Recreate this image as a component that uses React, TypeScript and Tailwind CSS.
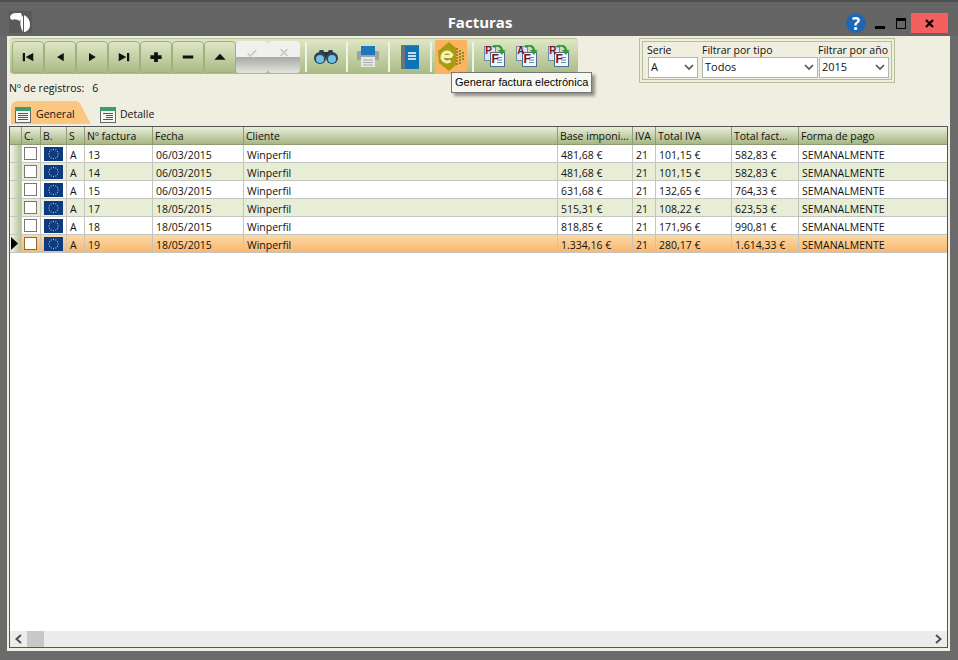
import React from "react";

const font = "[font-family:Open_Sans,Liberation_Sans,sans-serif]";

type Invoice = {
  num: string;
  date: string;
  base: string;
  totalIva: string;
  total: string;
};

const invoices: Invoice[] = [
  { num: "13", date: "06/03/2015", base: "481,68 €", totalIva: "101,15 €", total: "582,83 €" },
  { num: "14", date: "06/03/2015", base: "481,68 €", totalIva: "101,15 €", total: "582,83 €" },
  { num: "15", date: "06/03/2015", base: "631,68 €", totalIva: "132,65 €", total: "764,33 €" },
  { num: "17", date: "18/05/2015", base: "515,31 €", totalIva: "108,22 €", total: "623,53 €" },
  { num: "18", date: "18/05/2015", base: "818,85 €", totalIva: "171,96 €", total: "990,81 €" },
  { num: "19", date: "18/05/2015", base: "1.334,16 €", totalIva: "280,17 €", total: "1.614,33 €" },
];

const cols = [
  { label: "C.", w: "w-[19px]" },
  { label: "B.", w: "w-[26px]" },
  { label: "S", w: "w-[18px]" },
  { label: "Nº factura", w: "w-[68px]" },
  { label: "Fecha", w: "w-[91px]" },
  { label: "Cliente", w: "w-[314px]" },
  { label: "Base imponi...", w: "w-[75px]" },
  { label: "IVA", w: "w-[23px]" },
  { label: "Total IVA", w: "w-[76px]" },
  { label: "Total fact...", w: "w-[67px]" },
  { label: "Forma de pago", w: "flex-1" },
];

function NavButton({ children }: { children: React.ReactNode }) {
  return (
    <div className="flex h-[32px] w-[32px] items-center justify-center rounded-[4px] border border-[#9fb07c] bg-gradient-to-b from-[#dfe6c6] to-[#aabb86]">
      <svg width="12" height="10" viewBox="0 0 16 13" fill="#111">
        {children}
      </svg>
    </div>
  );
}

function GhostButton({ mark }: { mark: string }) {
  return (
    <div className="flex h-[32px] w-[32px] flex-col overflow-hidden rounded-[4px]">
      <div className="flex h-[16px] items-end justify-center bg-[#f0f0ee]">
        <svg width="12" height="8" viewBox="0 0 14 9" fill="none" stroke="#c9c9c7" strokeWidth="2">
          <path d={mark} />
        </svg>
      </div>
      <div className="flex-1 bg-gradient-to-b from-[#a9a9a5] to-[#e6e6e0]" />
    </div>
  );
}

function Sep() {
  return <div className="mx-[4px] h-[30px] w-[2px] bg-[#f1f3e6]" />;
}

function Binoculars() {
  return (
    <svg width="24" height="14" viewBox="0 0 24 14">
      <rect x="5" y="0" width="5" height="5" rx="1.5" fill="#2b3f4f" />
      <rect x="14" y="0" width="5" height="5" rx="1.5" fill="#2b3f4f" />
      <rect x="9" y="2" width="6" height="5" fill="#24323e" />
      <circle cx="6" cy="8" r="6" fill="#2f4354" />
      <circle cx="18" cy="8" r="6" fill="#2f4354" />
      <circle cx="6" cy="9" r="4" fill="#6fc3e8" />
      <circle cx="18" cy="9" r="4" fill="#6fc3e8" />
    </svg>
  );
}

function Printer() {
  return (
    <svg width="22" height="21" viewBox="0 0 22 21">
      <rect x="4" y="0" width="14" height="7" fill="#1c78b8" />
      <rect x="0" y="5" width="22" height="9" rx="1" fill="#9aa4a8" />
      <rect x="4" y="5" width="14" height="4" fill="#1c78b8" />
      <rect x="4" y="11" width="14" height="10" fill="#e8e8e4" />
      <path d="M6 14h10M6 16.5h10M6 19h10" stroke="#a9a9a9" strokeWidth="1" />
    </svg>
  );
}

function Book() {
  return (
    <svg width="18" height="24" viewBox="0 0 18 24">
      <rect x="0" y="0" width="18" height="24" fill="#6c7478" />
      <rect x="4" y="1" width="14" height="23" fill="#0f73b7" />
      <path d="M7 8h8M7 11h8M7 14h8" stroke="#ffffff" strokeWidth="1.4" />
    </svg>
  );
}

function EInvoice() {
  const dots = [
    [18, 6], [21, 8], [18, 9], [21, 11], [24, 10], [18, 12], [24, 13], [21, 14],
    [18, 15], [24, 16], [21, 17], [18, 18], [21, 20], [18, 21],
  ];
  return (
    <svg width="26" height="29" viewBox="0 0 26 29">
      <path d="M11 0 L18 6 L18 23 L11 29 L1 21 L0 9 Z" fill="#a89b10" />
      <path d="M4 14.5h10M14 14.5a5 5 0 1 0 -1.6 4.2" fill="none" stroke="#f4efc0" strokeWidth="3" />
      <g fill="#8f8a2a">
        {dots.map(([x, y], i) => (
          <rect key={i} x={x} y={y} width="2" height="2" />
        ))}
      </g>
    </svg>
  );
}

function DocIcon({ letter }: { letter: string }) {
  return (
    <svg width="24" height="24" viewBox="0 0 24 24">
      <rect x="2.5" y="1.5" width="11" height="14" fill="#dbe7f2" stroke="#6f8ca8" />
      <rect x="8.5" y="7.5" width="14" height="14" fill="#f1f6fb" stroke="#47709a" />
      <path d="M15 12.5h5M15 15h5M15 17.5h5" stroke="#6f8ca8" strokeWidth="1" />
      <text x="3.2" y="9" fontSize="10" fontWeight="700" fill="#7a1226" fontFamily="Liberation Sans, sans-serif">{letter}</text>
      <text x="9.6" y="18" fontSize="12" fontWeight="700" fill="#7a1226" fontFamily="Liberation Sans, sans-serif">F</text>
      <path d="M11 2 C15 -1 20 1 20 6" fill="none" stroke="#2e9b33" strokeWidth="2.2" />
      <path d="M16 5 L23.5 5 L20 10 Z" fill="#2e9b33" />
    </svg>
  );
}

function FakeSelect({ value, className }: { value: string; className: string }) {
  return (
    <div className={`flex h-[21px] items-center justify-between border border-[#b5b5ad] bg-white pl-[2px] pr-[3px] text-[11px] text-[#111] ${className}`}>
      <span>{value}</span>
      <svg width="10" height="7" viewBox="0 0 10 7" fill="none" stroke="#555" strokeWidth="1.7">
        <path d="M1 1 L5 5 L9 1" />
      </svg>
    </div>
  );
}

function TabIcon({ color, indent }: { color: string; indent?: boolean }) {
  return (
    <svg width="16" height="16" viewBox="0 0 16 16">
      <rect x="0.5" y="0.5" width="15" height="15" fill="#f7f7f2" stroke="#666" />
      <rect x="0" y="0" width="16" height="4" fill={color} />
      <path
        d={indent ? "M3 6.5h10M6 8.5h7M6 10.5h7M3 12.5h10" : "M3 6.5h10M3 8.5h10M3 10.5h10M3 12.5h10"}
        stroke="#555"
        strokeWidth="1"
      />
    </svg>
  );
}

function Flag() {
  const dots = Array.from({ length: 12 }, (_, i) => {
    const a = (i / 12) * Math.PI * 2;
    return { x: 9.5 + Math.cos(a) * 4.6, y: 7 + Math.sin(a) * 4.6 };
  });
  return (
    <svg width="19" height="14" viewBox="0 0 19 14">
      <rect width="19" height="14" fill="#0d3a80" />
      {dots.map((d, i) => (
        <rect key={i} x={d.x - 0.5} y={d.y - 0.5} width="1" height="1" fill="#d6d68a" />
      ))}
    </svg>
  );
}

function Logo() {
  return (
    <div className="flex h-[22px] w-[23px] items-center justify-center bg-[#5a5a5a]">
      <svg width="21" height="20" viewBox="0 0 21 20" fill="#fff">
        <path d="M0 5 Q1 1 6 1 L11 1 L12 4 L10 9 Q5 6 2 8 Q0 7 0 5 Z" />
        <path d="M11 5 L13 4 L13 20 Q9 14 11 5 Z" />
        <path d="M14 3 Q20 6 20 13 Q20 18 15 20 L14 20 Z" />
      </svg>
    </div>
  );
}

function Row({ inv, index }: { inv: Invoice; index: number }) {
  const selected = index === 5;
  const bg = selected
    ? "bg-gradient-to-b from-[#fbd9a6] to-[#f9b86f]"
    : index % 2 === 1
    ? "bg-[#e8eed6]"
    : "bg-white";
  const cells = [
    inv.num,
    inv.date,
    "Winperfil",
    inv.base,
    "21",
    inv.totalIva,
    inv.total,
    "SEMANALMENTE",
  ];
  const widths = cols.slice(3);
  return (
    <div className={`flex h-[18px] border-b border-[#c4c4c0] ${bg}`}>
      <div className="flex w-[12px] items-center border-r border-[#c4c4c0] bg-gradient-to-r from-[#f5f6ee] to-[#b4c298]">
        {selected && (
          <svg width="8" height="13" viewBox="0 0 8 13" fill="#000" className="ml-[1px]">
            <path d="M0 0 L7 6.5 L0 13 Z" />
          </svg>
        )}
      </div>
      <div className={`flex items-center justify-center border-r border-[#c4c4c0] pr-[1px] ${cols[0].w}`}>
        <div className={`h-[13px] w-[13px] border bg-white ${selected ? "border-[#8a6a3a]" : "border-[#777]"}`} />
      </div>
      <div className={`flex items-center justify-center border-r border-[#c4c4c0] ${cols[1].w}`}>
        <Flag />
      </div>
      <div className={`flex items-center border-r border-[#c4c4c0] pl-[3px] pt-[4px] text-[10.5px] ${cols[2].w}`}>A</div>
      {cells.map((c, i) => (
        <div
          key={i}
          className={`flex items-center overflow-hidden whitespace-nowrap pl-[3px] pt-[4px] text-[10.5px] ${
            i < cells.length - 1 ? "border-r border-[#c4c4c0]" : ""
          } ${widths[i].w}`}
        >
          {c}
        </div>
      ))}
    </div>
  );
}

export default function App() {
  return (
    <div className={`relative flex h-[660px] w-[958px] flex-col overflow-hidden bg-[#6b6b6b] text-[#111] ${font}`}>
      {/* title bar */}
      <div className="flex h-[36px] shrink-0 items-end border-t-2 border-[#4f4f4f] bg-[#656565] pb-[3px] pl-[9px] pr-[10px]">
        <Logo />
        <div className="flex-1 pb-[1px] pl-[82px] text-center text-[15px] font-bold leading-[20px] text-white">Facturas</div>
        <div className="flex items-center">
          <div className="flex h-[20px] w-[20px] items-center justify-center rounded-full bg-[#1f66b4] text-[17px] font-bold leading-none text-white">?</div>
          <div className="ml-[9px] mt-[8px] h-[3px] w-[10px] bg-black" />
          <div className="ml-[11px] h-[11px] w-[10px] border border-t-[3px] border-black" />
          <div className="ml-[5px] flex h-[20px] w-[37px] items-center justify-center bg-[#f55f5f]">
            <svg width="9" height="9" viewBox="0 0 9 9" stroke="#000" strokeWidth="2.2">
              <path d="M1 1 L8 8 M8 1 L1 8" />
            </svg>
          </div>
        </div>
      </div>

      {/* body */}
      <div className="mb-[9px] ml-[7px] mr-[8px] flex flex-1 flex-col bg-[#f0eee1] px-[2px] pb-[3px]">
        <div className="flex h-[44px] items-start pt-[2px]">
          <div className="ml-[1px] flex h-[36px] w-[568px] items-center rounded-[4px] border-t border-[#b7c39c] bg-gradient-to-b from-[#dfe6c6] to-[#a9ba84] pl-[2px]">
            <NavButton><path d="M1 1h3v11H1z M15 1v11L5 6.5z" /></NavButton>
            <NavButton><path d="M13 1v11L4 6.5z" /></NavButton>
            <NavButton><path d="M4 1v11l9-5.5z" /></NavButton>
            <NavButton><path d="M1 1v11l10-5.5z M12 1h3v11h-3z" /></NavButton>
            <NavButton><path d="M5.5 0h5v4h5v5h-5v4h-5V9h-5V4h5z" /></NavButton>
            <NavButton><path d="M1 4.5h14v4H1z" /></NavButton>
            <NavButton><path d="M8 2 L15.5 10 H0.5 Z" /></NavButton>
            <GhostButton mark="M2 5 L5 8 L12 1" />
            <GhostButton mark="M3 0 L11 8 M11 0 L3 8" />
            <div className="ml-[1px] flex items-center">
              <Sep />
            </div>
            <div className="-ml-[1px] flex w-[32px] justify-center"><Binoculars /></div>
            <Sep />
            <div className="flex w-[32px] justify-center"><Printer /></div>
            <Sep />
            <div className="flex w-[32px] justify-center"><Book /></div>
            <Sep />
            <div className="-ml-[1px] flex h-[34px] w-[32px] items-center justify-center bg-[#fdb25f]"><EInvoice /></div>
            <div className="ml-[5px] mr-[8px] h-[30px] w-[2px] bg-[#f1f3e6]" />
            <div className="flex gap-[8px]">
              <DocIcon letter="P" />
              <DocIcon letter="A" />
              <DocIcon letter="R" />
            </div>
          </div>

          <div className="ml-[61px] flex h-[45px] w-[256px] shrink-0 gap-[4px] border-4 border-double border-[#b4c196] pl-[5px] pt-[1px] text-[10.5px]">
            <div className="flex flex-col">
              <span className="-ml-[1px] h-[14px] leading-[15px]">Serie</span>
              <FakeSelect value="A" className="w-[50px]" />
            </div>
            <div className="flex flex-col">
              <span className="h-[14px] leading-[15px]">Filtrar por tipo</span>
              <FakeSelect value="Todos" className="w-[116px]" />
            </div>
            <div className="-ml-[3px] flex flex-col">
              <span className="-ml-[1px] h-[14px] whitespace-nowrap leading-[15px]">Filtrar por año</span>
              <FakeSelect value="2015" className="w-[70px]" />
            </div>
          </div>
        </div>

        <div className="flex h-[17px] items-center text-[10.5px]">
          <span>Nº de registros:</span>
          <span className="ml-[8px]">6</span>
        </div>

        <div className="flex h-[29px] items-end pb-[2px]">
          <div className="ml-[2px] flex h-[23px] w-[80px] items-center gap-[5px] bg-[#fbc67f] pl-[4px] pt-[5px] text-[10.5px] [clip-path:polygon(0_100%,0_6px,1px_3px,3px_1px,6px_0,66px_0,69px_2px,71px_6px,76px_16px,80px_23px)]">
            <TabIcon color="#3f9a72" />
            <span>General</span>
          </div>
          <div className="ml-[9px] flex h-[23px] items-center gap-[4px] pt-[5px] text-[10.5px]">
            <TabIcon color="#3f9a72" indent />
            <span>Detalle</span>
          </div>
        </div>

        {/* grid */}
        <div className="flex flex-1 flex-col border border-[#555] bg-white">
          <div className="flex h-[18px] border-b border-[#8d9a72] bg-gradient-to-b from-[#e9eeda] to-[#a6b684] text-[10.5px]">
            <div className="w-[12px] border-r border-[#8d9a72]" />
            {cols.map((c) => (
              <div
                key={c.label}
                className={`flex items-center overflow-hidden whitespace-nowrap pl-[2px] pt-[2px] ${c.w} ${c.label === "Forma de pago" ? "" : "border-r border-[#8d9a72]"}`}
              >
                {c.label}
              </div>
            ))}
          </div>
          {invoices.map((inv, i) => (
            <Row key={inv.num} inv={inv} index={i} />
          ))}
          <div className="flex-1" />
          <div className="flex h-[16px] items-center bg-[#ececec]">
            <svg width="17" height="16" viewBox="0 0 17 16" fill="none" stroke="#505050" strokeWidth="2">
              <path d="M11 4 L6.5 8 L11 12" />
            </svg>
            <div className="h-[16px] w-[17px] bg-[#c8c8c8]" />
            <div className="flex-1" />
            <svg width="17" height="16" viewBox="0 0 17 16" fill="none" stroke="#505050" strokeWidth="2">
              <path d="M6 4 L10.5 8 L6 12" />
            </svg>
          </div>
        </div>
      </div>

      {/* tooltip over the toolbar */}
      <div className="absolute left-[451px] top-[72px] flex h-[21px] w-[141px] items-center whitespace-nowrap border border-[#767676] bg-[#f8f8f2] pl-[3px] text-[11px] text-black shadow-[3px_3px_3px_rgba(0,0,0,0.4)]">
        <span className="[font-family:Liberation_Sans,sans-serif]">Generar factura electrónica</span>
      </div>
    </div>
  );
}
